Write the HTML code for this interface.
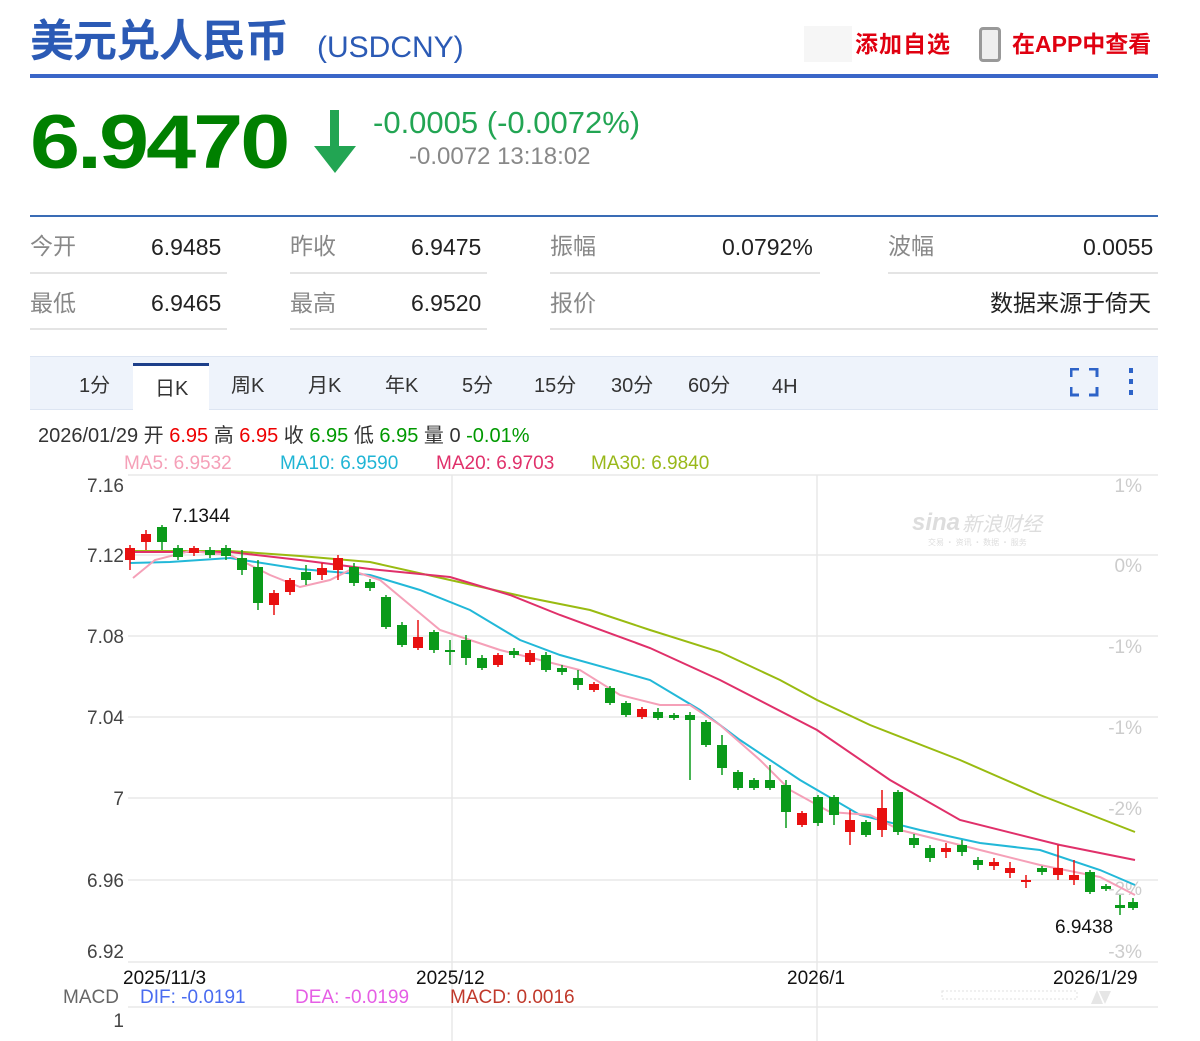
<!DOCTYPE html>
<html><head><meta charset="utf-8">
<style>
*{margin:0;padding:0;box-sizing:border-box}
body{width:1200px;height:1041px;background:#fff;position:relative;overflow:hidden;font-family:"Liberation Sans","Noto Sans CJK SC",sans-serif}
.a{position:absolute;white-space:nowrap;line-height:1}
.lbl{color:#888;font-size:23px}
.val{color:#222;font-size:23px}
.tab{position:absolute;top:376px;font-size:20px;color:#333;line-height:1}
</style></head><body>
<div class="a" style="left:30px;top:20px;font-size:44px;font-weight:bold;color:#2b5ab5;letter-spacing:-1px">美元兑人民币</div>
<div class="a" style="left:317px;top:33px;font-size:30px;color:#2b5ab5">(USDCNY)</div>
<div class="a" style="left:804px;top:26px;width:48px;height:36px;background:#f6f6f6"></div>
<div class="a" style="left:855px;top:33px;font-size:23px;font-weight:bold;color:#e00010;letter-spacing:1px">添加自选</div>
<div class="a" style="left:979px;top:27px;width:22px;height:35px;border:3px solid #999;border-radius:4px;background:#eee"></div>
<div class="a" style="left:1012px;top:33px;font-size:23px;font-weight:bold;color:#e00010">在APP中查看</div>
<div class="a" style="left:30px;top:74px;width:1128px;height:4px;background:#3a66c8"></div>

<div class="a" style="left:30px;top:104px;font-size:90px;font-weight:bold;color:#008000;letter-spacing:-3px;transform:scaleY(0.85);transform-origin:0 0">6.9470</div>
<svg class="a" style="left:312px;top:110px" width="46" height="65"><rect x="18" y="0" width="9" height="42" fill="#22a553"/><polygon points="2,36 44,36 23,63" fill="#22a553"/></svg>
<div class="a" style="left:373px;top:107px;font-size:31px;color:#22a553">-0.0005 (-0.0072%)</div>
<div class="a" style="left:409px;top:145px;font-size:24px;color:#888">-0.0072 13:18:02</div>

<div class="a" style="left:30px;top:215px;width:1128px;height:2px;background:#3a6cb5"></div>
<div class="a lbl" style="left:30px;top:235px">今开</div><div class="a val" style="left:151px;top:236px">6.9485</div>
<div class="a lbl" style="left:290px;top:235px">昨收</div><div class="a val" style="left:411px;top:236px">6.9475</div>
<div class="a lbl" style="left:550px;top:235px">振幅</div><div class="a val" style="left:722px;top:236px">0.0792%</div>
<div class="a lbl" style="left:888px;top:235px">波幅</div><div class="a val" style="left:1083px;top:236px">0.0055</div>
<div class="a lbl" style="left:30px;top:292px">最低</div><div class="a val" style="left:151px;top:292px">6.9465</div>
<div class="a lbl" style="left:290px;top:292px">最高</div><div class="a val" style="left:411px;top:292px">6.9520</div>
<div class="a lbl" style="left:550px;top:292px">报价</div><div class="a val" style="left:990px;top:292px">数据来源于倚天</div>
<div class="a" style="left:30px;top:272px;width:197px;height:2px;background:#e4e4e4"></div>
<div class="a" style="left:290px;top:272px;width:197px;height:2px;background:#e4e4e4"></div>
<div class="a" style="left:550px;top:272px;width:270px;height:2px;background:#e4e4e4"></div>
<div class="a" style="left:888px;top:272px;width:270px;height:2px;background:#e4e4e4"></div>
<div class="a" style="left:30px;top:328px;width:197px;height:2px;background:#e4e4e4"></div>
<div class="a" style="left:290px;top:328px;width:197px;height:2px;background:#e4e4e4"></div>
<div class="a" style="left:550px;top:328px;width:608px;height:2px;background:#e4e4e4"></div>

<div class="a" style="left:30px;top:356px;width:1128px;height:54px;background:#eef3fb;border-top:1px solid #dde5f2;border-bottom:1px solid #dde5f2"></div>
<div class="a" style="left:133px;top:363px;width:76px;height:48px;background:#fff;border-top:3px solid #1d3f8a"></div>
<div class="tab" style="left:79px">1分</div><div class="tab" style="left:155px;top:379px">日K</div>
<div class="tab" style="left:231px">周K</div><div class="tab" style="left:308px">月K</div>
<div class="tab" style="left:385px">年K</div><div class="tab" style="left:462px">5分</div>
<div class="tab" style="left:534px">15分</div><div class="tab" style="left:611px">30分</div>
<div class="tab" style="left:688px">60分</div><div class="tab" style="left:772px;top:377px">4H</div>
<svg class="a" style="left:1070px;top:368px" width="72" height="30"><g stroke="#2d63c8" stroke-width="3" fill="none"><path d="M1 9V1H9M19 1H27V9M27 19V27H19M9 27H1V19"/></g><g fill="#2d63c8"><rect x="59" y="0" width="4" height="5"/><rect x="59" y="11" width="4" height="5"/><rect x="59" y="22" width="4" height="5"/></g></svg>

<div class="a" style="left:38px;top:426px;font-size:20px;color:#333">2026/01/29 开 <span style="color:#e00">6.95</span> 高 <span style="color:#e00">6.95</span> 收 <span style="color:#090">6.95</span> 低 <span style="color:#090">6.95</span> 量 0 <span style="color:#090">-0.01%</span></div>
<div class="a" style="left:124px;top:454px;font-size:19px;color:#f5a0b8">MA5: 6.9532</div>
<div class="a" style="left:280px;top:454px;font-size:19px;color:#20b5d5">MA10: 6.9590</div>
<div class="a" style="left:436px;top:454px;font-size:19px;color:#e0306a">MA20: 6.9703</div>
<div class="a" style="left:591px;top:454px;font-size:19px;color:#99b81a">MA30: 6.9840</div>

<svg class="a" style="left:0;top:0" width="1200" height="1041" id="ch">
<g stroke="#e8e8e8" stroke-width="1.5">
<line x1="128" y1="475" x2="1158" y2="475"/><line x1="128" y1="555" x2="1158" y2="555"/><line x1="128" y1="636" x2="1158" y2="636"/><line x1="128" y1="717" x2="1158" y2="717"/><line x1="128" y1="798" x2="1158" y2="798"/><line x1="128" y1="880" x2="1158" y2="880"/><line x1="128" y1="962" x2="1158" y2="962"/><line x1="128" y1="1007" x2="1158" y2="1007"/>
<line x1="452" y1="475" x2="452" y2="1041"/><line x1="817" y1="475" x2="817" y2="1041"/>
</g>
<g font-family="Liberation Sans" font-size="19" fill="#444" text-anchor="end">
<text x="124" y="492">7.16</text><text x="124" y="562">7.12</text><text x="124" y="643">7.08</text><text x="124" y="724">7.04</text><text x="124" y="805">7</text><text x="124" y="887">6.96</text><text x="124" y="958">6.92</text><text x="124" y="1027">1</text>
</g>
<g font-family="Liberation Sans" font-size="19" fill="#ccc" text-anchor="end">
<text x="1142" y="492">1%</text><text x="1142" y="572">0%</text><text x="1142" y="653">-1%</text><text x="1142" y="734">-1%</text><text x="1142" y="815">-2%</text><text x="1142" y="895">-2%</text><text x="1142" y="958">-3%</text>
</g>
<text x="912" y="530" font-family="Liberation Sans" font-size="24" font-style="italic" font-weight="bold" fill="#ddd">sina</text>
<text x="962" y="531" font-family="Noto Sans CJK SC" font-size="20" font-style="italic" fill="#ddd">新浪财经</text>
<text x="928" y="545" font-family="Noto Sans CJK SC" font-size="8" fill="#ddd">交易 · 资讯 · 数据 · 服务</text>
<g font-family="Liberation Sans" font-size="19" fill="#111">
<text x="172" y="522">7.1344</text><text x="1055" y="933">6.9438</text>
<text x="123" y="984">2025/11/3</text><text x="416" y="984">2025/12</text><text x="787" y="984">2026/1</text><text x="1053" y="984">2026/1/29</text>
</g>
<g font-family="Liberation Sans" font-size="19">
<text x="63" y="1003" fill="#666">MACD</text><text x="140" y="1003" fill="#4a6cf0">DIF: -0.0191</text><text x="295" y="1003" fill="#e55ee5">DEA: -0.0199</text><text x="450" y="1003" fill="#c0392b">MACD: 0.0016</text>
</g>
<rect x="942" y="991" width="135" height="8" fill="none" stroke="#e0e0e0" stroke-dasharray="2 2"/>
<polygon points="1091,1004 1097,990 1103,1004" fill="#e6e6e6"/><polygon points="1099,991 1111,991 1105,1004" fill="#e6e6e6"/>
<g fill="none" stroke-width="2">
<polyline stroke="#99bb11" points="130,551 230,551 300,556 370,562 450,580 530,598 590,610 650,630 720,652 780,680 817,700 870,725 960,760 1040,795 1135,832"/>
<polyline stroke="#e0306a" points="130,552 230,552 300,560 370,569 450,577 510,595 560,615 650,648 720,680 817,730 890,780 960,820 1060,845 1135,860"/>
<polyline stroke="#22b8d8" points="130,563 170,562 230,558 300,569 370,575 420,590 470,610 520,640 560,655 650,680 700,710 740,740 800,780 860,815 920,830 980,843 1040,850 1100,870 1135,885"/>
<polyline stroke="#f5a0b8" points="133,578 155,560 190,551 230,555 270,575 300,587 330,580 350,570 380,580 410,605 440,630 470,640 500,650 540,660 580,670 620,695 660,705 690,705 720,725 760,760 790,790 830,812 870,815 900,830 940,840 980,850 1040,865 1100,877 1135,895"/>
</g>
<g id="cd"></g>
</svg>
<script>
var d=[[130,'r',548,560,545,570],[146,'r',534,542,530,550],[162,'g',527,542,525,550],[178,'g',548,557,545,560],[194,'r',548,553,546,556],[210,'g',550,555,547,558],[226,'g',548,556,545,560],[242,'g',558,570,550,575],[258,'g',567,603,560,610],[274,'r',593,605,590,615],[290,'r',580,592,578,595],[306,'g',572,580,565,585],[322,'r',568,575,563,580],[338,'r',558,570,555,580],[354,'g',567,583,563,586],[370,'g',582,588,579,591],[386,'g',597,627,595,629],[402,'g',625,645,622,647],[418,'r',637,648,620,650],[434,'g',632,650,630,653],[450,'g',650,652,640,665],[466,'g',640,658,635,665],[482,'g',658,668,655,670],[498,'r',655,665,653,667],[514,'g',651,655,648,658],[530,'r',653,662,650,665],[546,'g',655,670,652,672],[562,'g',668,672,665,675],[578,'g',678,685,670,690],[594,'r',684,690,682,692],[610,'g',688,703,686,705],[626,'g',703,715,701,717],[642,'r',709,717,707,719],[658,'g',712,718,708,720],[674,'g',715,718,713,720],[690,'g',715,720,712,780],[706,'g',722,745,720,747],[722,'g',745,768,735,775],[738,'g',772,788,770,790],[754,'g',780,788,778,790],[770,'g',780,788,765,790],[786,'g',785,812,780,828],[802,'r',813,825,811,827],[818,'g',797,823,795,826],[834,'g',797,815,795,825],[850,'r',820,832,810,845],[866,'g',822,835,820,837],[882,'r',808,830,790,837],[898,'g',792,832,790,835],[914,'g',838,845,834,848],[930,'g',848,858,845,862],[946,'r',848,852,843,858],[962,'g',845,852,840,856],[978,'g',860,865,857,870],[994,'r',862,866,858,870],[1010,'r',868,873,862,878],[1026,'r',880,882,875,888],[1042,'g',868,872,866,875],[1058,'r',868,875,845,880],[1074,'r',875,880,860,885],[1090,'g',872,892,870,894],[1106,'g',886,889,884,891],[1120,'g',905,908,895,915],[1133,'g',902,908,898,910]];
var s='';d.forEach(function(c){var col=c[1]=='r'?'#e81010':'#0a9a1a';s+='<line x1="'+c[0]+'" x2="'+c[0]+'" y1="'+c[4]+'" y2="'+c[5]+'" stroke="'+col+'" stroke-width="1.5"/><rect x="'+(c[0]-5)+'" y="'+c[2]+'" width="10" height="'+Math.max(2,c[3]-c[2])+'" fill="'+col+'"/>';});
document.getElementById('cd').innerHTML=s;
</script>
</body></html>
